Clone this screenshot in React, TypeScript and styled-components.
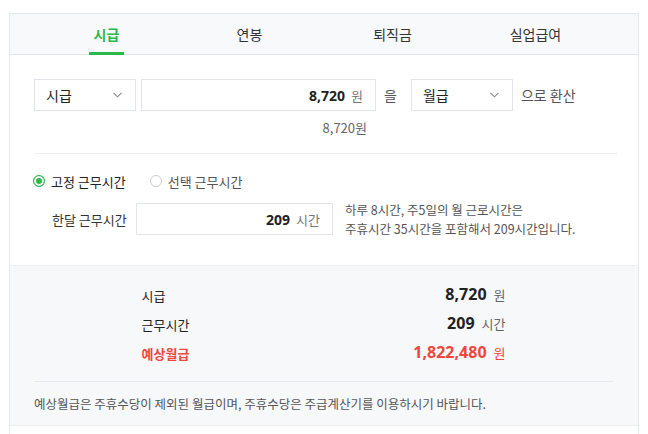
import React from 'react';
import styled, { createGlobalStyle } from 'styled-components';

const GREEN = '#2db84b';
const RED = '#f0463c';
const LINE = '#e1e5ea';

const GlobalStyle = createGlobalStyle`
  body {
    margin: 0;
    background: #fff;
    font-family: "Noto Sans CJK KR", "Noto Sans", sans-serif;
    color: #222;
  }
`;

const Page = styled.div`
  padding: 13px 0 0 9px;
`;

const Calculator = styled.div`
  width: 630px;
  box-sizing: border-box;
  border: 1px solid #e6e9ec;
  padding-bottom: 20px;
`;

const TabBar = styled.ul`
  display: flex;
  margin: 0;
  padding: 0 31px 0 25px;
  list-style: none;
  height: 40px;
  background: #f8f9fb;
  border-bottom: 1px solid ${LINE};
`;

const Tab = styled.li`
  flex: 1;
  display: flex;
  justify-content: center;
`;

const TabLink = styled.a<{ active?: boolean }>`
  display: flex;
  align-items: center;
  box-sizing: border-box;
  height: 41px;
  padding: 1px 5px 0;
  margin-bottom: -1px;
  font-size: 14px;
  color: ${(p) => (p.active ? GREEN : '#333')};
  font-weight: ${(p) => (p.active ? 700 : 400)};
  border-bottom: 3px solid ${(p) => (p.active ? GREEN : 'transparent')};
  cursor: pointer;
`;

const Body = styled.div`
  padding: 24px 21px 0 24px;
`;

const ConvertRow = styled.div`
  display: flex;
  align-items: center;
  height: 32px;
`;

const SelectBox = styled.div`
  display: flex;
  align-items: center;
  justify-content: space-between;
  width: 102px;
  height: 32px;
  box-sizing: border-box;
  padding: 0 13px 0 11px;
  border: 1px solid ${LINE};
  font-size: 14px;
  color: #222;
`;

const AmountBox = styled.div<{ width: number }>`
  display: flex;
  align-items: baseline;
  justify-content: flex-end;
  gap: 6px;
  width: ${(p) => p.width}px;
  height: 32px;
  box-sizing: border-box;
  padding: 0 12px 0 10px;
  line-height: 31px;
  border: 1px solid ${LINE};
  background: #fff;
`;

const Amount = styled.strong`
  font-size: 14px;
  font-weight: 700;
  color: #222;
  font-family: "Noto Sans", "Noto Sans CJK KR", sans-serif;
`;

const Unit = styled.span`
  font-size: 13px;
  color: #777;
`;

const Word = styled.span<{ gapLeft: number; gapRight?: number }>`
  margin: 0 ${(p) => p.gapRight ?? 0}px 0 ${(p) => p.gapLeft}px;
  font-size: 14px;
  color: #555;
`;

const Converted = styled.div`
  width: 342px;
  box-sizing: border-box;
  padding-right: 9px;
  margin-top: 7px;
  text-align: right;
  font-size: 13px;
  line-height: 20px;
  color: #666;
`;

const Divider = styled.hr`
  margin: 0;
  border: 0;
  border-top: 1px solid #eceef0;
`;

const TopDivider = styled(Divider)`
  margin-top: 15px;
`;

const RadioRow = styled.div`
  display: flex;
  align-items: center;
  gap: 25px;
  margin-top: 19px;
  height: 16px;
`;

const RadioLabel = styled.label<{ checked?: boolean }>`
  display: flex;
  align-items: center;
  gap: 6px;
  font-size: 13px;
  color: ${(p) => (p.checked ? '#222' : '#555')};
`;

const RadioDot = styled.span<{ checked?: boolean }>`
  width: 12px;
  height: 12px;
  box-sizing: border-box;
  border-radius: 50%;
  border: 1px solid ${(p) => (p.checked ? GREEN : '#c8ccd0')};
  background: ${(p) => (p.checked ? GREEN : '#fff')};
  box-shadow: ${(p) => (p.checked ? 'inset 0 0 0 2px #fff' : 'none')};
  margin-left: -1px;
`;

const HoursRow = styled.div`
  display: flex;
  align-items: center;
  margin-top: 11px;
`;

const FieldLabel = styled.span`
  width: 102px;
  padding-left: 18px;
  box-sizing: border-box;
  font-size: 13px;
  color: #333;
`;

const Help = styled.p`
  margin: 0 0 0 12px;
  font-size: 12.5px;
  line-height: 19px;
  color: #555;
`;

const Result = styled.div`
  margin-top: 27px;
  background: #f7f8fa;
  border-top: 1px solid #eceef0;
  border-bottom: 1px solid #eceef0;
  padding: 13px 25px 0 24px;
`;

const ResultList = styled.dl`
  width: 364px;
  margin: 0 auto;
`;

const ResultRow = styled.div<{ highlight?: boolean }>`
  display: flex;
  justify-content: space-between;
  align-items: center;
  height: 29px;
  color: ${(p) => (p.highlight ? RED : '#222')};
`;

const ResultTerm = styled.dt<{ highlight?: boolean }>`
  font-size: 13px;
  font-weight: ${(p) => (p.highlight ? 700 : 400)};
  padding-top: 3px;
`;

const ResultValue = styled.dd`
  display: flex;
  align-items: baseline;
  gap: 7px;
  margin: 0;
`;

const BigNumber = styled.strong`
  font-size: 16px;
  font-weight: 700;
  font-family: "Noto Sans", "Noto Sans CJK KR", sans-serif;
`;

const ResultUnit = styled.span<{ highlight?: boolean }>`
  font-size: 13px;
  color: ${(p) => (p.highlight ? RED : '#666')};
`;

const ResultDivider = styled(Divider)`
  margin-top: 15px;
  border-top-color: #e6e8eb;
`;

const Note = styled.p`
  margin: 0;
  padding: 11px 0 10px;
  font-size: 12.5px;
  line-height: 22px;
  color: #555;
`;

const Chevron = () => (
  <svg width="9" height="6" viewBox="0 0 9 6" fill="none">
    <path d="M0.5 0.8L4.5 4.8L8.5 0.8" stroke="#888" strokeWidth="1.1" />
  </svg>
);

const tabs = ['시급', '연봉', '퇴직금', '실업급여'];

const results = [
  { label: '시급', value: '8,720', unit: '원' },
  { label: '근무시간', value: '209', unit: '시간' },
  { label: '예상월급', value: '1,822,480', unit: '원', highlight: true },
];

const App = (): JSX.Element => (
  <Page>
    <GlobalStyle />
    <Calculator>
      <TabBar>
        {tabs.map((name, i) => (
          <Tab key={name}>
            <TabLink active={i === 0}>{name}</TabLink>
          </Tab>
        ))}
      </TabBar>

      <Body>
        <ConvertRow>
          <SelectBox>
            시급
            <Chevron />
          </SelectBox>
          <Word gapLeft={5} />
          <AmountBox width={235}>
            <Amount>8,720</Amount>
            <Unit>원</Unit>
          </AmountBox>
          <Word gapLeft={8} gapRight={14}>을</Word>
          <SelectBox>
            월급
            <Chevron />
          </SelectBox>
          <Word gapLeft={8}>으로 환산</Word>
        </ConvertRow>
        <Converted>8,720원</Converted>

        <TopDivider />

        <RadioRow>
          <RadioLabel checked>
            <RadioDot checked />
            고정 근무시간
          </RadioLabel>
          <RadioLabel>
            <RadioDot />
            선택 근무시간
          </RadioLabel>
        </RadioRow>

        <HoursRow>
          <FieldLabel>한달 근무시간</FieldLabel>
          <AmountBox width={197}>
            <Amount>209</Amount>
            <Unit>시간</Unit>
          </AmountBox>
          <Help>
            하루 8시간, 주5일의 월 근로시간은
            <br />
            주휴시간 35시간을 포함해서 209시간입니다.
          </Help>
        </HoursRow>
      </Body>

      <Result>
        <ResultList>
          {results.map((r) => (
            <ResultRow key={r.label} highlight={r.highlight}>
              <ResultTerm highlight={r.highlight}>{r.label}</ResultTerm>
              <ResultValue>
                <BigNumber>{r.value}</BigNumber>
                <ResultUnit highlight={r.highlight}>{r.unit}</ResultUnit>
              </ResultValue>
            </ResultRow>
          ))}
        </ResultList>
        <ResultDivider />
        <Note>예상월급은 주휴수당이 제외된 월급이며, 주휴수당은 주급계산기를 이용하시기 바랍니다.</Note>
      </Result>
    </Calculator>
  </Page>
);

export default App;
